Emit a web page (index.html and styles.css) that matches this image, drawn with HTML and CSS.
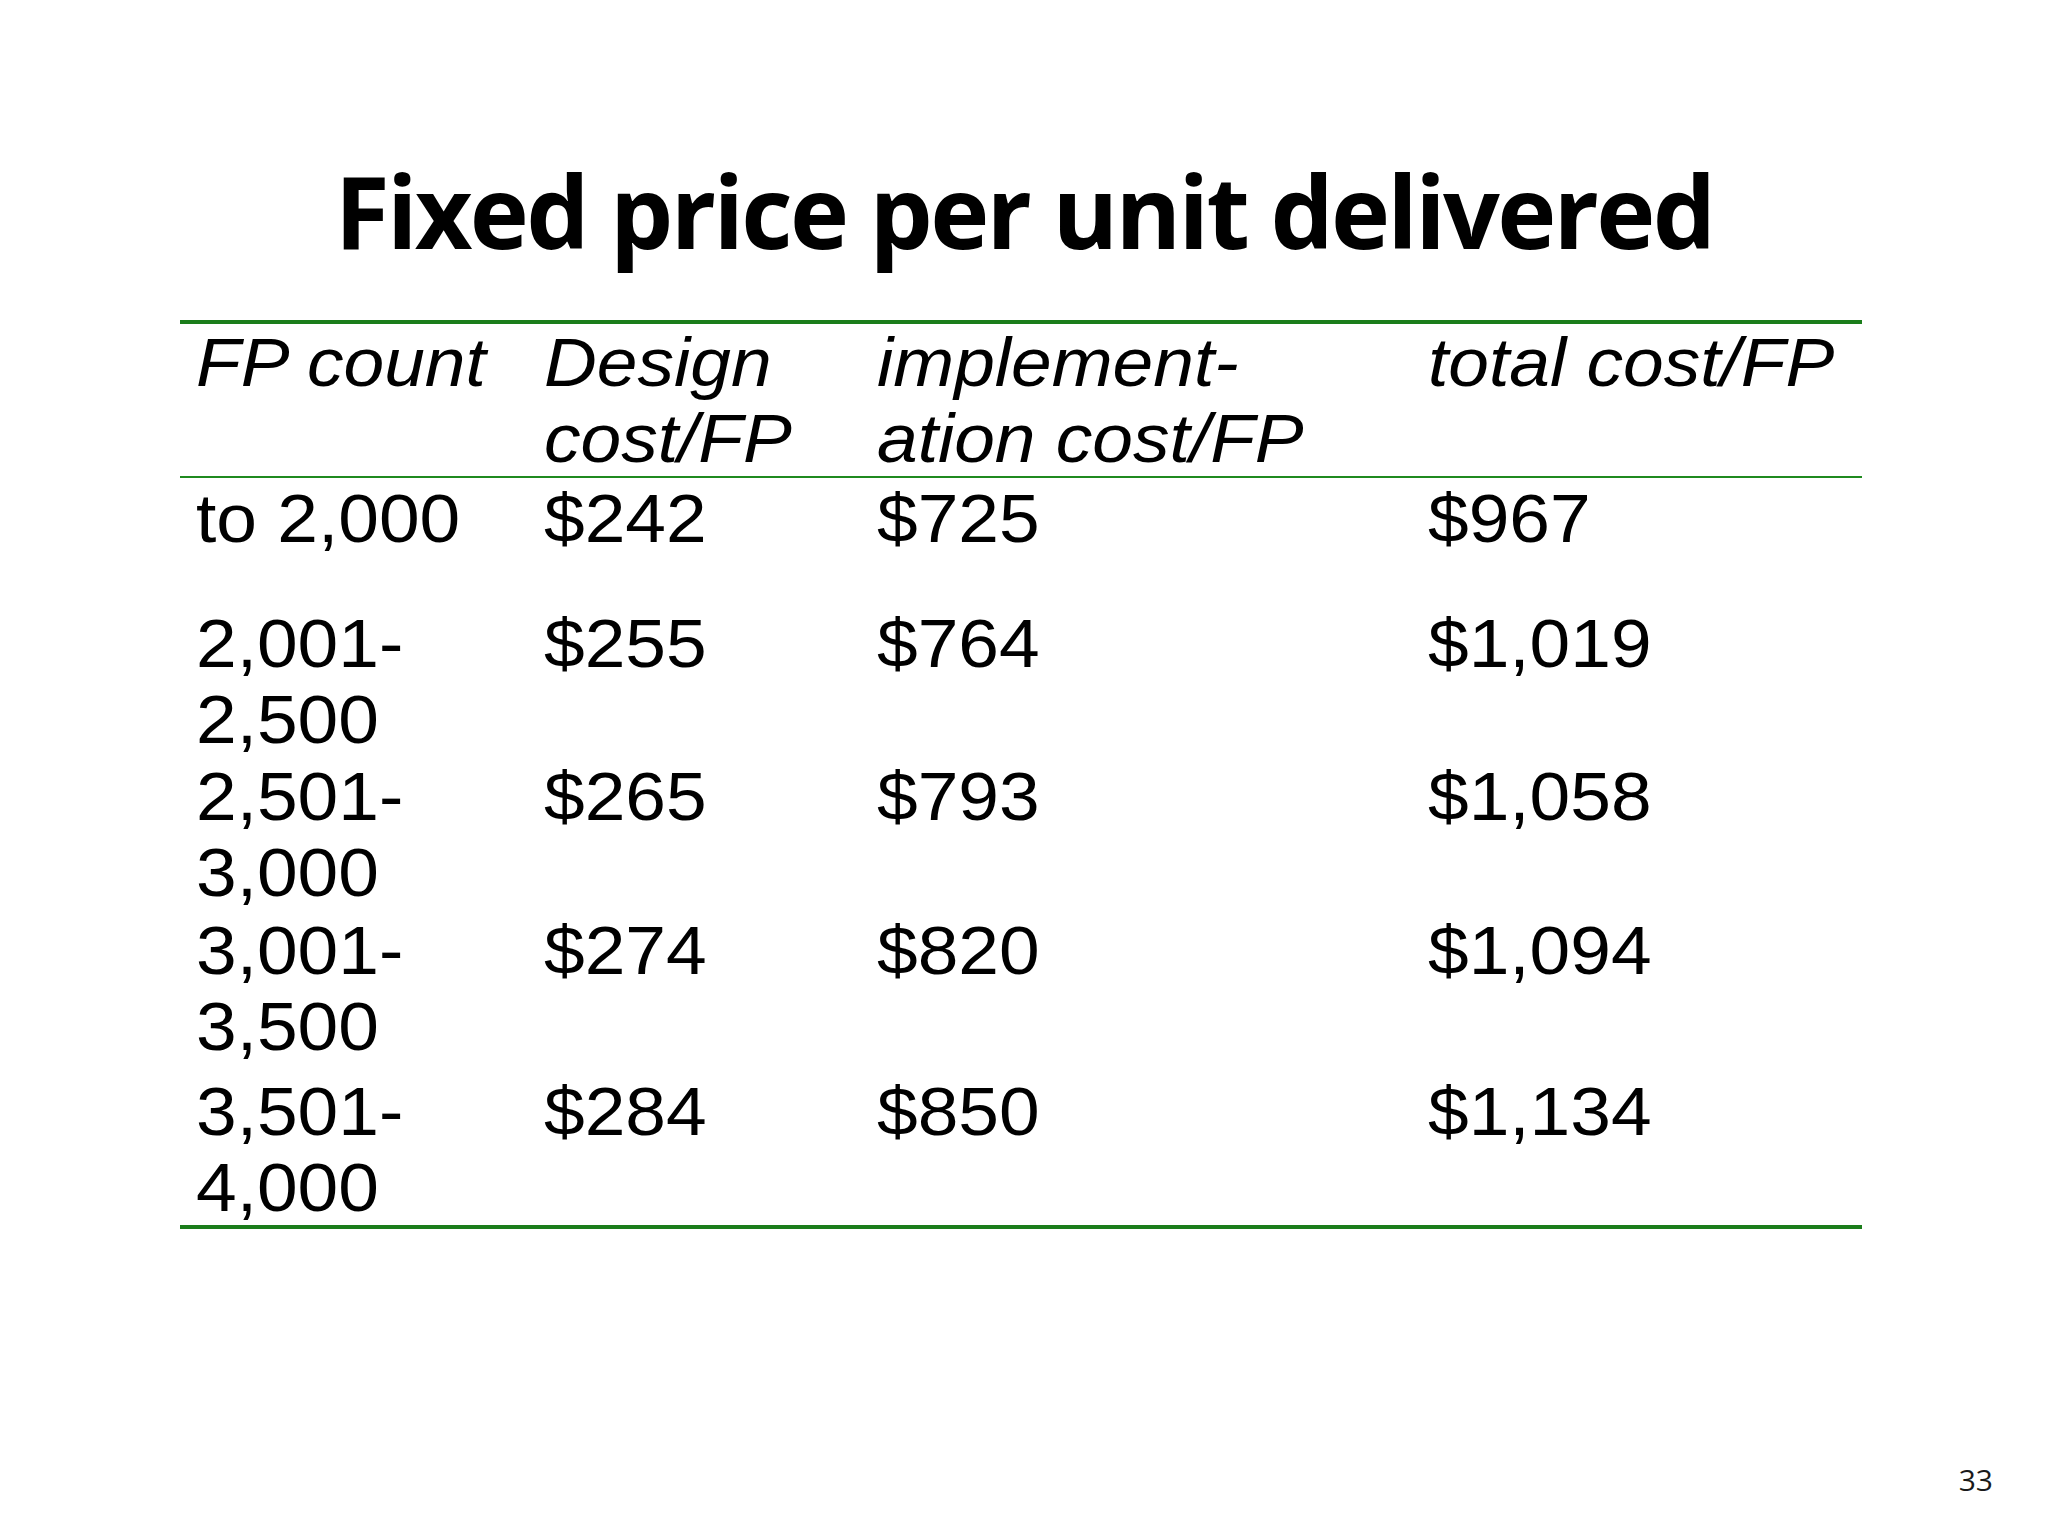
FILE: index.html
```html
<!DOCTYPE html>
<html lang="en">
<head>
<meta charset="utf-8">
<title>Fixed price per unit delivered</title>
<link rel="stylesheet" href="styles.css">
</head>
<body>
<div class="slide">
  <h1 class="title">Fixed price per unit delivered</h1>
  <div class="table">
    <div class="row head">
      <div class="cell">FP count</div>
      <div class="cell">Design<br>cost/FP</div>
      <div class="cell">implement-<br>ation cost/FP</div>
      <div class="cell">total cost/FP</div>
    </div>
    <div class="row r1">
      <div class="cell">to 2,000</div>
      <div class="cell">$242</div>
      <div class="cell">$725</div>
      <div class="cell">$967</div>
    </div>
    <div class="row r2">
      <div class="cell">2,001-<br>2,500</div>
      <div class="cell">$255</div>
      <div class="cell">$764</div>
      <div class="cell">$1,019</div>
    </div>
    <div class="row r3">
      <div class="cell">2,501-<br>3,000</div>
      <div class="cell">$265</div>
      <div class="cell">$793</div>
      <div class="cell">$1,058</div>
    </div>
    <div class="row r4">
      <div class="cell">3,001-<br>3,500</div>
      <div class="cell">$274</div>
      <div class="cell">$820</div>
      <div class="cell">$1,094</div>
    </div>
    <div class="row r5">
      <div class="cell">3,501-<br>4,000</div>
      <div class="cell">$284</div>
      <div class="cell">$850</div>
      <div class="cell">$1,134</div>
    </div>
  </div>
  <div class="page-num">33</div>
</div>
</body>
</html>
```
FILE: styles.css
```css
html, body {
  margin: 0;
  padding: 0;
  background: #ffffff;
}

.slide {
  width: 2048px;
  height: 1536px;
  display: flex;
  flex-direction: column;
  background: #ffffff;
  color: #000000;
  box-sizing: border-box;
}

.title {
  margin: 160px 0 0 0;
  height: 100px;
  font-family: "Open Sans", "Liberation Sans", sans-serif;
  font-weight: 700;
  font-size: 100px;
  line-height: 100px;
  letter-spacing: -2.7px;
  text-align: center;
  color: #000000;
}

.table {
  margin: 60px 0 0 180px;
  width: 1682px;
  border-top: 4px solid #1b7d1b;
  border-bottom: 4px solid #1b7d1b;
  font-family: "Liberation Sans", Arial, sans-serif;
  font-size: 68px;
  line-height: 76px;
  color: #000000;
}

.row {
  display: grid;
  grid-template-columns: 348px 333px 551px 450px;
}

.cell {
  padding-left: 16px;
  white-space: nowrap;
  transform: scaleX(1.075);
  transform-origin: 16px 0;
}

.head {
  font-style: italic;
  height: 152px;
  border-bottom: 2px solid #1f8a1f;
}

.r1 {
  padding: 2px 0 49px 0;
}

.r2 {
  padding: 0;
}

.r3 {
  padding: 1px 0 0 0;
}

.r4 {
  padding: 2px 0 9px 0;
}

.r5 {
  padding: 0;
}

.page-num {
  margin-top: auto;
  padding: 0 55px 41px 0;
  text-align: right;
  font-family: "Open Sans", "Liberation Sans", sans-serif;
  font-size: 30px;
  line-height: 30px;
  color: #1a1a1a;
}
```
